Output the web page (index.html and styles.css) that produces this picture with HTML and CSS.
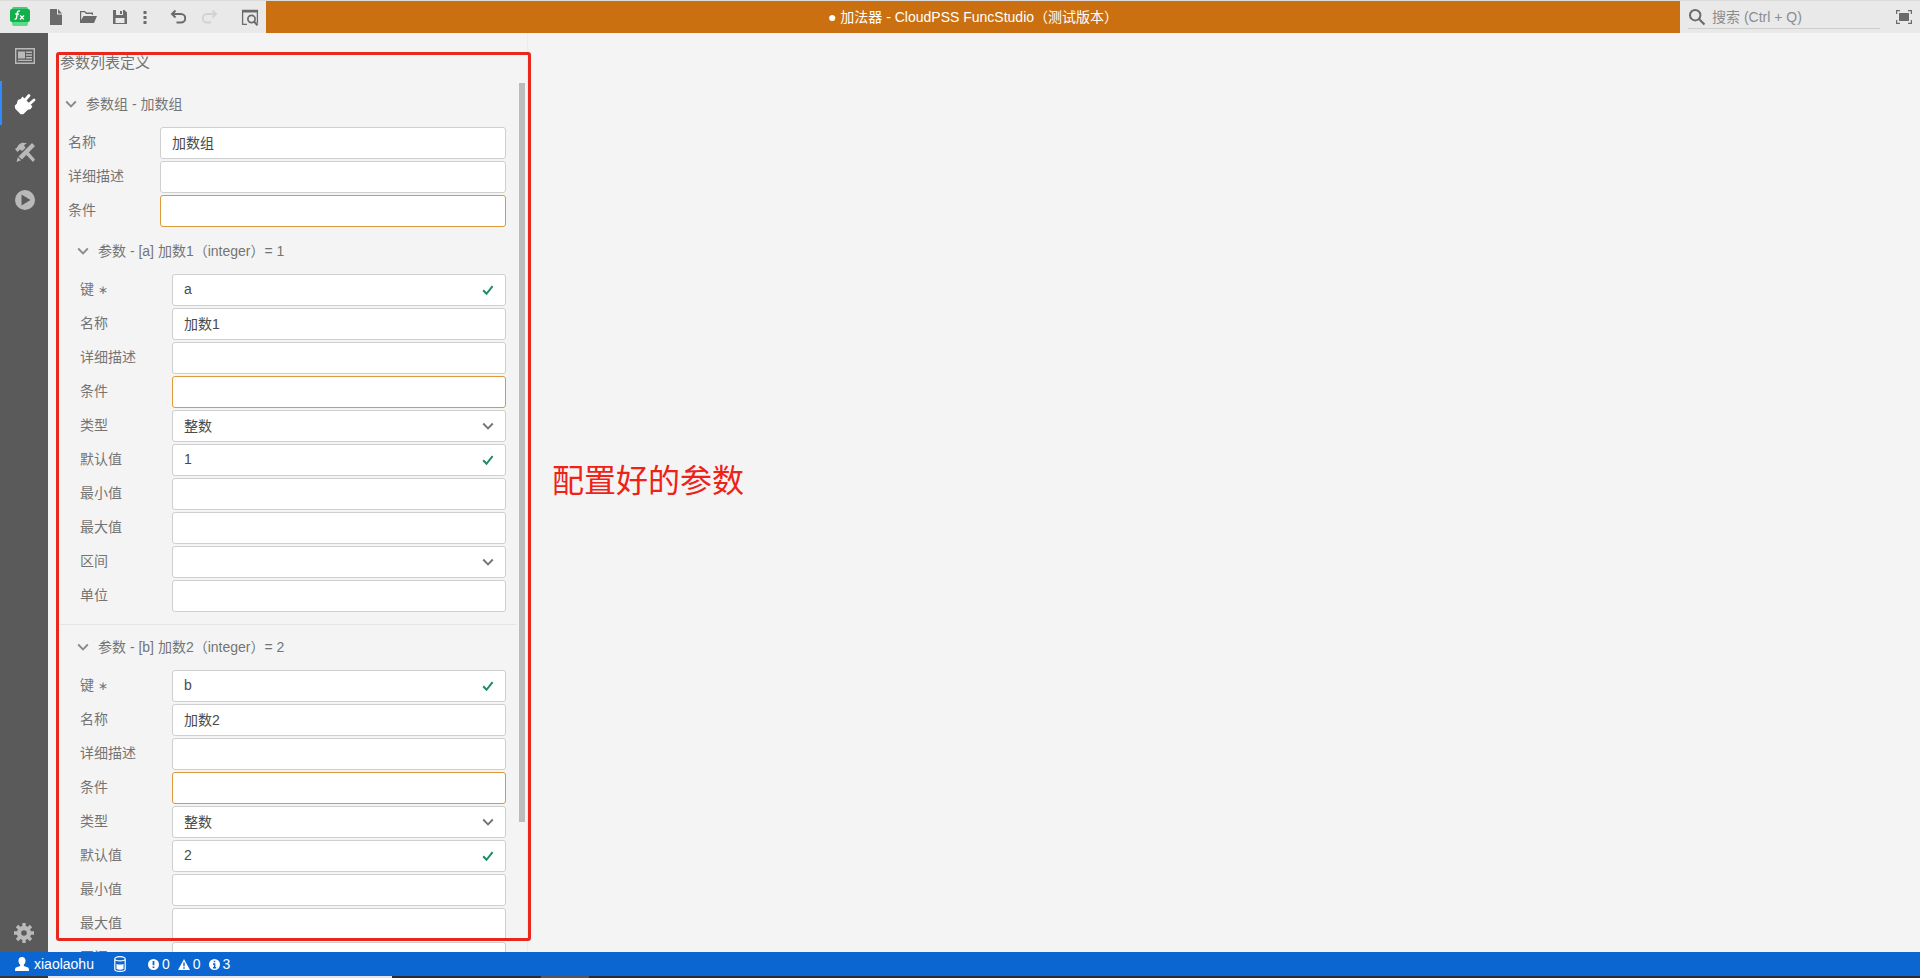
FILE: index.html
```html
<!DOCTYPE html>
<html lang="zh-CN">
<head>
<meta charset="utf-8">
<title>加法器 - CloudPSS FuncStudio</title>
<link rel="stylesheet" href="styles.css">
</head>
<body>
<svg class="defs" aria-hidden="true">
  <symbol id="chevron" viewBox="0 0 12 12"><path d="M1.200 3.500 6 8.300l4.800-4.800" fill="none" stroke="currentColor" stroke-width="1.900"/></symbol>
  <symbol id="check" viewBox="0 0 12 12"><path d="M1.200 6.200 4.500 9.800 10.600 2.200" fill="none" stroke="currentColor" stroke-width="2"/></symbol>
</svg>
<div class="app">
  <header class="topbar">
    <div class="tools">
      <span class="logo"><svg width="20" height="20" viewBox="0 0 20 20"><rect x="2" y="0" width="16" height="5" rx="2" fill="#42cd73"/><rect x="2" y="13" width="16" height="6" rx="2" fill="#5bdc8b"/><rect x="0" y="2" width="20" height="13" rx="2" fill="#12b04b"/><path d="M10 4.200c-1.800-.8-2.500.2-2.700 1.700L6.600 10.400c-.2 1.600-.8 2-2 1.600M5.300 7h3.600M10.200 8.400l3.600 4M14 8.400l-4 4" fill="none" stroke="#fff" stroke-width="1.400"/></svg></span>
      <button class="tool" aria-label="新建"><svg width="16" height="16" viewBox="0 0 16 16"><path fill="currentColor" d="M2 0h7v5.500h5V16H2zM10 0l4 4.500h-4z"/></svg></button>
      <button class="tool" aria-label="打开"><svg width="18" height="16" viewBox="0 0 18 16"><path fill="currentColor" d="M1 14V2h5l1.500 1.500H14V6h-1.200V5H7L5.500 3.300H2.200V11L4.500 7H18l-3 7z"/></svg></button>
      <button class="tool" aria-label="保存"><svg width="16" height="16" viewBox="0 0 16 16"><path fill="currentColor" fill-rule="evenodd" d="M1 1h11.500L15 3.500V15H1zM4 1v5h7V1zM3.500 9v5h9V9zM8 2h2v3H8z"/></svg></button>
      <button class="tool tool-narrow" aria-label="更多"><svg width="4" height="16" viewBox="0 0 4 16"><path fill="currentColor" d="M.5 2h3v3h-3zM.5 7h3v3h-3zM.5 12h3v3h-3z"/></svg></button>
      <button class="tool" aria-label="撤销"><svg width="16" height="16" viewBox="0 0 16 16"><path fill="none" stroke="currentColor" stroke-width="2" d="M5.500 1.500 2 5l3.500 3.500M1.500 5H11a4 4 0 0 1 0 8.500H6.500"/></svg></button>
      <button class="tool tool-last" aria-label="重做" disabled><svg width="16" height="16" viewBox="0 0 16 16"><path fill="none" stroke="currentColor" stroke-width="1.900" d="M10.500 1.500 14 5l-3.500 3.500M14.500 5H5a4 4 0 0 0 0 8.500h4"/></svg></button>
      <button class="tool" aria-label="预览"><svg width="18" height="18" viewBox="0 0 18 18"><path fill="none" stroke="currentColor" stroke-width="1.300" d="M6 16.400H1.600V2.500h14.800v13"/><path fill="currentColor" d="M1 2h16v2.500H1z"/><circle cx="10.500" cy="11" r="3.600" fill="none" stroke="currentColor" stroke-width="1.700"/><path stroke="currentColor" stroke-width="2" d="m13 13.500 3.500 3.700"/></svg></button>
    </div>
    <h1 class="doc-title">● 加法器 - CloudPSS FuncStudio（测试版本）</h1>
    <div class="search">
      <label class="search-box">
        <svg width="18" height="18" viewBox="0 0 18 18"><circle cx="7.200" cy="7.200" r="5.200" fill="none" stroke="currentColor" stroke-width="2"/><path stroke="currentColor" stroke-width="2.200" d="m11 11 5.500 5.500"/></svg>
        <input type="search" placeholder="搜索 (Ctrl + Q)" aria-label="搜索">
      </label>
      <button class="fullscreen" aria-label="全屏"><svg width="16" height="14" viewBox="0 0 16 14"><path fill="currentColor" d="M3 3h10v8H3z"/><path fill="none" stroke="currentColor" stroke-width="1.200" d="M.6 4V.6H4M12 .6h3.400V4M15.400 10v3.400H12M4 13.400H.6V10"/></svg></button>
    </div>
  </header>

  <div class="body">
    <nav class="sidebar">
      <button class="nav" aria-label="概览"><svg width="20" height="16" viewBox="0 0 20 16"><path fill="none" stroke="currentColor" stroke-width="1.400" d="M.7.7h18.600v14.600H.7z"/><path fill="currentColor" d="M3 3.500h7v7H3zM11 3.500h6V5h-6zM11 6.200h6v1.500h-6zM11 9h6v1.500h-6zM3 11.700h14V13H3z"/></svg></button>
      <button class="nav nav-active" aria-label="接口"><svg width="22" height="22" viewBox="0 0 22 22"><path fill="currentColor" stroke="currentColor" stroke-width="1.500" stroke-linejoin="round" d="M8.500 4.500 17.500 13.500 16 15.500 13.500 16 9 20.500H7L2 15.500 1.500 13 3.500 11 4.500 7.500 7.500 6.500z"/><path stroke="currentColor" stroke-width="2.800" stroke-linecap="round" d="M11.500 6.500 15 2.500M15.500 11 20 7"/></svg></button>
      <button class="nav" aria-label="实现"><svg width="20" height="20" viewBox="0 0 20 20"><path fill="currentColor" d="M0 7l1.500-1L4 2.500C6 .5 9 0 12 1.500L9 3l1.500 3L7 9 5 7.500 2.500 10zM11 12.500l2.500-2.500 6.500 7.500-2 2.500zM17 1l3 3L7 17.500 3.500 14.500zM2.800 15.300l3.200 3L1.500 20z"/></svg></button>
      <button class="nav" aria-label="运行"><svg width="20" height="20" viewBox="0 0 20 20"><path fill="currentColor" fill-rule="evenodd" d="M10 0a10 10 0 1 1 0 20 10 10 0 0 1 0-20zM6.500 4.500v11l9-5.500z"/></svg></button>
      <button class="nav nav-settings" aria-label="设置"><svg width="20" height="20" viewBox="0 0 20 20"><circle cx="10" cy="10" r="5" fill="none" stroke="currentColor" stroke-width="4.400"/><path stroke="currentColor" stroke-width="3.400" d="M10 0v4M10 16v4M0 10h4M16 10h4M3 3l3 3M14 14l3 3M3 17l3-3M14 6l3-3"/></svg></button>
    </nav>

    <main class="workspace">
      <section class="panel">
        <h2 class="panel-title">参数列表定义</h2>
        <div class="scroller">
          <form class="list">
            <button type="button" class="heading"><svg class="chev"><use href="#chevron"/></svg>参数组 - 加数组</button>
            <div class="row"><label for="g-name">名称</label><div class="field"><input id="g-name" value="加数组"></div></div>
            <div class="row"><label for="g-desc">详细描述</label><div class="field"><input id="g-desc"></div></div>
            <div class="row"><label for="g-cond">条件</label><div class="field"><input id="g-cond" class="warn"></div></div>

            <div class="param">
              <button type="button" class="heading"><svg class="chev"><use href="#chevron"/></svg>参数 - [a] 加数1（integer）= 1</button>
              <div class="row"><label for="a-key">键 <span class="req">∗</span></label><div class="field"><input id="a-key" value="a"><svg class="mark ok"><use href="#check"/></svg></div></div>
              <div class="row"><label for="a-name">名称</label><div class="field"><input id="a-name" value="加数1"></div></div>
              <div class="row"><label for="a-desc">详细描述</label><div class="field"><input id="a-desc"></div></div>
              <div class="row"><label for="a-cond">条件</label><div class="field"><input id="a-cond" class="warn"></div></div>
              <div class="row"><label for="a-type">类型</label><div class="field"><select id="a-type"><option>整数</option></select><svg class="mark"><use href="#chevron"/></svg></div></div>
              <div class="row"><label for="a-def">默认值</label><div class="field"><input id="a-def" value="1"><svg class="mark ok"><use href="#check"/></svg></div></div>
              <div class="row"><label for="a-min">最小值</label><div class="field"><input id="a-min"></div></div>
              <div class="row"><label for="a-max">最大值</label><div class="field"><input id="a-max"></div></div>
              <div class="row"><label for="a-range">区间</label><div class="field"><select id="a-range"><option></option></select><svg class="mark"><use href="#chevron"/></svg></div></div>
              <div class="row"><label for="a-unit">单位</label><div class="field"><input id="a-unit"></div></div>
            </div>

            <div class="param param-next">
              <button type="button" class="heading"><svg class="chev"><use href="#chevron"/></svg>参数 - [b] 加数2（integer）= 2</button>
              <div class="row"><label for="b-key">键 <span class="req">∗</span></label><div class="field"><input id="b-key" value="b"><svg class="mark ok"><use href="#check"/></svg></div></div>
              <div class="row"><label for="b-name">名称</label><div class="field"><input id="b-name" value="加数2"></div></div>
              <div class="row"><label for="b-desc">详细描述</label><div class="field"><input id="b-desc"></div></div>
              <div class="row"><label for="b-cond">条件</label><div class="field"><input id="b-cond" class="warn"></div></div>
              <div class="row"><label for="b-type">类型</label><div class="field"><select id="b-type"><option>整数</option></select><svg class="mark"><use href="#chevron"/></svg></div></div>
              <div class="row"><label for="b-def">默认值</label><div class="field"><input id="b-def" value="2"><svg class="mark ok"><use href="#check"/></svg></div></div>
              <div class="row"><label for="b-min">最小值</label><div class="field"><input id="b-min"></div></div>
              <div class="row"><label for="b-max">最大值</label><div class="field"><input id="b-max"></div></div>
              <div class="row"><label for="b-range">区间</label><div class="field"><select id="b-range"><option></option></select><svg class="mark"><use href="#chevron"/></svg></div></div>
            </div>
          </form>
          <div class="track"><div class="thumb"></div></div>
        </div>
      </section>
      <div class="outline"></div>
      <p class="note">配置好的参数</p>
    </main>
  </div>

  <footer class="status">
    <span class="item user"><svg width="14" height="14" viewBox="0 0 14 14"><path fill="currentColor" d="M7 0c2.300 0 3.500 1.500 3.500 3.800 0 1.700-.7 3-1.700 3.900v1.200L13 10.500c.7.300 1 1 1 3.500H0c0-2.500.3-3.200 1-3.500l4.200-1.600V7.700c-1-.9-1.700-2.200-1.700-3.900C3.500 1.500 4.700 0 7 0z"/></svg>xiaolaohu</span>
    <span class="item store"><svg width="12" height="16" viewBox="0 0 12 16"><path fill="none" stroke="currentColor" stroke-width="1.200" d="M.8 2.800v10.400C.8 14.500 3 15.300 6 15.300s5.200-.8 5.200-2.100V2.800C11.200 1.500 9 .7 6 .7S.8 1.500.8 2.800zm0 0C.8 4.100 3 4.900 6 4.900s5.200-.8 5.200-2.100"/><path fill="currentColor" d="M2.500 8c2 .8 5 .8 7 0v5c-2 .9-5 .9-7 0z"/></svg></span>
    <span class="item"><svg width="11" height="11" viewBox="0 0 11 11"><circle cx="5.500" cy="5.500" r="5.500" fill="currentColor"/><path stroke="#0b66d1" stroke-width="1.800" d="M5.500 2v4.200M5.500 7.400v1.700"/></svg>0</span>
    <span class="item"><svg width="12" height="11" viewBox="0 0 12 11"><path fill="currentColor" d="m6 0 6 11H0z"/><path stroke="#0b66d1" stroke-width="1.400" d="M6 3.500v3.700M6 8.200v1.500"/></svg>0</span>
    <span class="item"><svg width="11" height="11" viewBox="0 0 11 11"><circle cx="5.500" cy="5.500" r="5.500" fill="currentColor"/><path fill="none" stroke="#0b66d1" stroke-width="1.500" d="M5.500 1.700v1.600M4 4.900h1.600v3.600M4 8.700h3.200"/></svg>3</span>
  </footer>
  <div class="edge"></div>
</div>
</body>
</html>
```

FILE: styles.css
```css
* { box-sizing: border-box; }
body {
  margin: 0;
  font: 14px/20px "Liberation Sans", "Noto Sans CJK SC", sans-serif;
  color: #747474;
  background: #f4f4f4;
}
button, input, select { font: inherit; color: inherit; margin: 0; }
button { border: 0; padding: 0; background: none; }
h1, h2, p { margin: 0; font-weight: 400; }
svg { display: block; flex: none; }
.defs { position: absolute; width: 0; height: 0; }

.app { display: flex; flex-direction: column; height: 100vh; overflow: hidden; }

.topbar { display: flex; flex: none; height: 33px; border-top: 1px solid #dcdcdc; background: #e9e9e9; }
.tools { display: flex; color: #6b6b6b; }
.logo { display: flex; width: 40px; align-items: center; justify-content: center; }
.tool { display: flex; width: 32px; align-items: center; justify-content: center; }
.tool-narrow { width: 18px; margin-right: 8px; }
.tool-last { margin-right: 8px; }
.tool:disabled { color: #d2d2d2; }
.doc-title {
  flex: 1;
  font-size: 14px;
  line-height: 32px;
  text-align: center;
  color: #fff;
  background: #ca7010;
}
.search { display: flex; width: 240px; padding: 0 8px; align-items: center; justify-content: space-between; color: #6b6b6b; }
.search-box { display: flex; width: 192px; height: 24px; gap: 6px; align-items: center; border-bottom: 1px solid #cdcdcd; }
.search-box input { flex: 1; min-width: 0; height: 22px; padding: 0; border: 0; outline: 0; background: none; }
.search-box input::placeholder { color: #8c8c8c; opacity: 1; }

.body { display: flex; flex: 1; min-height: 0; }
.sidebar { display: flex; flex: none; flex-direction: column; gap: 4px; width: 48px; background: #5a5a5a; color: #b9b9b9; }
.nav { display: flex; height: 44px; padding-top: 1px; align-items: center; justify-content: center; border-left: 2px solid transparent; }
.nav-active { color: #fff; border-left-color: #2f8cff; }
.nav-settings { height: 40px; margin-top: auto; border-left: 0; }

.workspace { position: relative; display: flex; flex: 1; min-width: 0; align-items: stretch; }
.panel { display: flex; flex-direction: column; width: 25vw; padding-left: 12px; border-right: 1px solid #ececec; overflow: hidden; }
.panel-title { flex: none; padding: 20px 0 9px; font-size: 15px; line-height: 20px; }
.scroller { display: flex; flex: 1; min-height: 0; overflow: hidden; }
.list { flex: 1; min-width: 0; }
.heading { display: flex; width: 100%; height: 45px; padding: 0 0 2px 5px; gap: 9px; align-items: center; text-align: left; }
.chev { width: 12px; height: 12px; color: #8a8a8a; }
.param .row, .param .heading { margin-left: 12px; width: auto; }
.param-next { margin-top: 10px; border-top: 1px solid #e4e4e4; }
.row { display: flex; padding: 0 10px 2px 8px; }
.row label { flex: none; width: 92px; line-height: 30px; }
.req { font-size: 12px; }
.field { position: relative; flex: 1; min-width: 0; }
.field input, .field select {
  display: block;
  width: 100%;
  height: 32px;
  padding: 0 11px;
  border: 1px solid #cfcfcf;
  border-radius: 3px;
  outline: 0;
  appearance: none;
  background: #fff;
  color: #4a4a4a;
}
.field input { padding-bottom: 2px; }
.field .warn { border-color: #dc9a3a; }
.mark { position: absolute; top: 10px; right: 12px; width: 12px; height: 12px; pointer-events: none; }
.ok { color: #218a63; }
.track { flex: none; width: 6px; margin: 0 2px 0 3px; padding-top: 1px; }
.thumb { width: 6px; height: 85%; background: #bcbcbc; }

.outline {
  position: absolute;
  inset: 19px auto 11px 8px;
  width: calc(25vw - 5px);
  border: 3px solid #e8271d;
  border-radius: 3px;
  pointer-events: none;
}
.note { align-self: center; margin-left: 24px; padding-bottom: 24px; font-size: 32px; line-height: 48px; color: #ee2217; }

.status { display: flex; flex: none; height: 24px; padding-left: 15px; align-items: center; gap: 8px; background: #0b66d1; color: #fff; }
.item { display: flex; align-items: center; gap: 3px; }
.user { gap: 5px; margin-right: 12px; }
.store { margin-right: 14px; }
.edge { flex: none; height: 2px; background: linear-gradient(90deg, #34343a 48px, #e3e6ee 48px 392px, #2b2b35 392px 541px, #55555e 541px 589px, #2b2b35 589px); }
```
